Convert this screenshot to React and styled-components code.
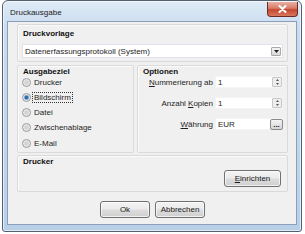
import React from "react";
import styled, { createGlobalStyle } from "styled-components";

const Global = createGlobalStyle`
  html, body { margin: 0; padding: 0; background: #ffffff; }
  body { font-family: "Liberation Sans", Arial, sans-serif; font-size: 8px; color: #1e1e1e; }
  * { box-sizing: border-box; }
`;

const UpArrow = () => (
  <svg width="3" height="2" viewBox="0 0 3 2"><path d="M0 2 H3 L1.5 0 Z" fill="#555" /></svg>
);
const DownArrow = () => (
  <svg width="3" height="2" viewBox="0 0 3 2"><path d="M0 0 H3 L1.5 2 Z" fill="#555" /></svg>
);

export default function App() {
  return (
    <>
      <Global />
      <Page>
        <Window>
          <TitleBar>
            <Title>Druckausgabe</Title>
            <CloseButton>
              <svg width="9" height="8" viewBox="0 0 9 8">
                <path d="M1.5 1 L7.5 7 M7.5 1 L1.5 7" stroke="#fff" strokeWidth="2" strokeLinecap="round" />
              </svg>
            </CloseButton>
          </TitleBar>
          <Client>
            <Group $top={3} $bottom={3}>
              <Caption>Druckvorlage</Caption>
              <Combo>
                <ComboText>Datenerfassungsprotokoll (System)</ComboText>
                <ComboArrow>
                  <svg width="5" height="3" viewBox="0 0 5 3">
                    <path d="M0 0 H5 L2.5 3 Z" fill="#222" />
                  </svg>
                </ComboArrow>
              </Combo>
            </Group>
            <Columns>
              <Group $top={0}>
                <Caption>Ausgabeziel</Caption>
                <RadioList>
                  {["Drucker", "Bildschirm", "Datei", "Zwischenablage", "E-Mail"].map((t) => (
                    <RadioRow key={t}>
                      <Radio $checked={t === "Bildschirm"} />
                      <RadioLabel $focus={t === "Bildschirm"}>{t}</RadioLabel>
                    </RadioRow>
                  ))}
                </RadioList>
              </Group>
              <Group $top={0}>
                <Caption>Optionen</Caption>
                <FieldGrid>
                  <FieldLabel><u>N</u>ummerierung ab</FieldLabel>
                  <Input>
                    1
                    <Spin>
                      <SpinHalf><UpArrow /></SpinHalf>
                      <SpinHalf><DownArrow /></SpinHalf>
                    </Spin>
                  </Input>
                  <FieldLabel>Anzahl <u>K</u>opien</FieldLabel>
                  <Input>
                    1
                    <Spin>
                      <SpinHalf><UpArrow /></SpinHalf>
                      <SpinHalf><DownArrow /></SpinHalf>
                    </Spin>
                  </Input>
                  <FieldLabel><u>W</u>ährung</FieldLabel>
                  <Input>
                    EUR
                    <DotsButton>...</DotsButton>
                  </Input>
                </FieldGrid>
              </Group>
            </Columns>
            <Group $top={0} $bottom={4}>
              <Caption>Drucker</Caption>
              <RightRow>
                <Button><u>E</u>inrichten</Button>
              </RightRow>
            </Group>
            <Footer>
              <Button $wide>Ok</Button>
              <Button $wide>Abbrechen</Button>
            </Footer>
          </Client>
        </Window>
      </Page>
    </>
  );
}

const Page = styled.div`
  width: 305px;
  height: 234px;
  padding: 0 3px 2px 2px;
`;

const Window = styled.div`
  width: 300px;
  height: 232px;
  border: 1px solid #55606e;
  border-radius: 6px 6px 3px 3px;
  background: linear-gradient(180deg, #dfeaf6 0%, #c9dcf0 12%, #c0d6ec 60%, #b8cfe8 100%);
  box-shadow: inset 0 0 0 1px rgba(255, 255, 255, 0.6);
  padding: 0 4px 6px 4px;
  display: flex;
  flex-direction: column;
`;

const TitleBar = styled.div`
  height: 20px;
  flex: none;
  display: flex;
  align-items: flex-start;
  justify-content: space-between;
`;

const Title = styled.div`
  padding: 7px 0 0 3px;
  font-size: 8px;
  color: #1a1a1a;
`;

const CloseButton = styled.div`
  width: 31px;
  height: 15px;
  margin-right: -1px;
  margin-top: 1px;
  border: 1px solid #6b2a22;
  border-top: none;
  border-radius: 0 0 4px 4px;
  background: linear-gradient(180deg, #eab0a2 0%, #d77a68 45%, #c4472f 55%, #d9785e 100%);
  display: flex;
  align-items: center;
  justify-content: center;
`;

const Client = styled.div`
  flex: 1;
  background: #f0f0f0;
  border: 1px solid #8ba0b8;
  padding: 2px 8px 0 9px;
  display: flex;
  flex-direction: column;
  gap: 3px;
`;

const Group = styled.div`
  flex: none;
  border: 1px solid #dadada;
  border-radius: 2px;
  box-shadow: inset 1px 1px 0 #fbfbfb;
  padding: ${(p) => p.$top ?? 3}px 4px ${(p) => p.$bottom ?? 4}px 4px;
  display: flex;
  flex-direction: column;
  min-width: 0;
`;

const Caption = styled.div`
  font-weight: bold;
  font-size: 8px;
  height: 12px;
  line-height: 12px;
  padding-left: 1px;
  color: #111;
`;

const Combo = styled.div`
  margin-top: 4px;
  height: 14px;
  background: #fff;
  border: 1px solid #e2e3ea;
  display: flex;
  align-items: center;
  justify-content: space-between;
  padding: 0 1px 0 2px;
`;

const ComboText = styled.span`
  font-size: 8px;
`;

const ComboArrow = styled.div`
  width: 10px;
  height: 9px;
  border: 1px solid #a9a9a9;
  border-radius: 1px;
  background: linear-gradient(180deg, #f4f4f4, #d8d8d8);
  display: flex;
  align-items: center;
  justify-content: center;
`;

const Columns = styled.div`
  flex: none;
  display: grid;
  grid-template-columns: 117px 1fr;
  gap: 3px;
  height: 87px;
`;

const RadioList = styled.div`
  display: flex;
  flex-direction: column;
  gap: 5.3px;
  margin-top: -1px;
`;

const RadioRow = styled.div`
  display: flex;
  align-items: center;
  gap: 2px;
  height: 10px;
`;

const Radio = styled.span`
  width: 9px;
  height: 9px;
  border-radius: 50%;
  border: 1px solid #9a9a9a;
  background: ${(p) =>
    p.$checked
      ? "radial-gradient(circle, #2f6fb0 0 1.6px, #8fb6dc 2.2px, #e8e8e8 3px)"
      : "radial-gradient(circle, #d4d4d4 0 1.5px, #eeeeee 3.5px)"};
  flex: none;
`;

const RadioLabel = styled.span`
  font-size: 8px;
  padding: 0 1px;
  outline: ${(p) => (p.$focus ? "1px dotted #333" : "none")};
`;

const FieldGrid = styled.div`
  display: grid;
  grid-template-columns: 71px 1fr;
  column-gap: 2px;
  row-gap: 9px;
  align-items: center;
  margin-top: -2px;
`;

const FieldLabel = styled.div`
  text-align: right;
  font-size: 8px;
`;

const Input = styled.div`
  height: 12px;
  background: #fff;
  border: 1px solid #f4f4f4;
  display: flex;
  align-items: center;
  justify-content: space-between;
  padding-left: 2px;
  font-size: 8px;
`;

const Spin = styled.div`
  width: 10px;
  height: 10px;
  display: flex;
  flex-direction: column;
  border: 1px solid #c8c8c8;
  border-radius: 1px;
  background: #eeeeee;
`;

const SpinHalf = styled.div`
  flex: 1;
  display: flex;
  align-items: center;
  justify-content: center;
`;

const DotsButton = styled.div`
  width: 13px;
  height: 11px;
  margin-right: -1px;
  border: 1px solid #8a8a8a;
  border-radius: 2px;
  background: linear-gradient(180deg, #f4f4f4, #d6d6d6);
  font-weight: bold;
  font-size: 8px;
  line-height: 9px;
  text-align: center;
  color: #222;
`;

const RightRow = styled.div`
  display: flex;
  justify-content: flex-end;
  padding-top: 2px;
  padding-right: 2px;
`;

const Button = styled.div`
  width: ${(p) => (p.$wide ? "50px" : "57px")};
  height: 17px;
  border: 1px solid #707070;
  border-radius: 3px;
  background: linear-gradient(180deg, #f3f3f3 0%, #ebebeb 48%, #dddddd 52%, #cfcfcf 100%);
  box-shadow: inset 0 0 0 1px rgba(255, 255, 255, 0.7);
  display: flex;
  align-items: center;
  justify-content: center;
  font-size: 8px;
  color: #1a1a1a;
`;

const Footer = styled.div`
  flex: none;
  display: flex;
  justify-content: center;
  gap: 5px;
  padding-top: 6px;
`;
